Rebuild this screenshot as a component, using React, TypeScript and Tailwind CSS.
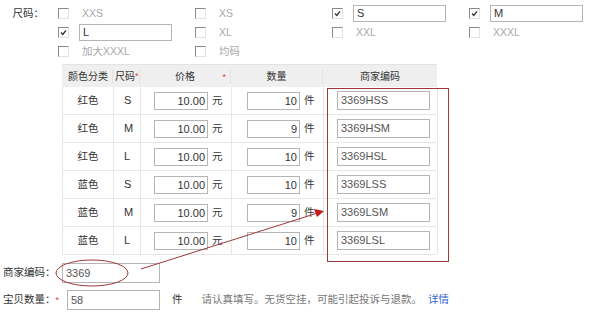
import React from 'react';

type Opt = { label: string; checked?: boolean };

const sizeRows: Opt[][] = [
  [{ label: 'XXS' }, { label: 'XS' }, { label: 'S', checked: true }, { label: 'M', checked: true }],
  [{ label: 'L', checked: true }, { label: 'XL' }, { label: 'XXL' }, { label: 'XXXL' }],
  [{ label: '加大XXXL' }, { label: '均码' }],
];

const skus = [
  { color: '红色', size: 'S', qty: '10', code: '3369HSS' },
  { color: '红色', size: 'M', qty: '9', code: '3369HSM' },
  { color: '红色', size: 'L', qty: '10', code: '3369HSL' },
  { color: '蓝色', size: 'S', qty: '10', code: '3369LSS' },
  { color: '蓝色', size: 'M', qty: '9', code: '3369LSM' },
  { color: '蓝色', size: 'L', qty: '10', code: '3369LSL' },
];

const Box: React.FC<{ checked?: boolean }> = ({ checked }) => (
  <span className="inline-flex h-[11px] w-[11px] shrink-0 items-center justify-center border border-t-[#8a8a8a] border-l-[#8a8a8a] border-r-[#e2e2e2] border-b-[#e2e2e2] bg-white">
    {checked && (
      <svg width="7" height="7" viewBox="0 0 7 7">
        <path d="M1 3.6 L2.8 5.4 L6 1.4" fill="none" stroke="#333" strokeWidth="1.4" />
      </svg>
    )}
  </span>
);

const Star = () => <span className="text-[9px] leading-none text-[#e0383e]">*</span>;

export default function App() {
  return (
    <div className="relative h-[315px] w-[600px] overflow-hidden bg-white font-['Liberation_Sans','Noto_Sans_CJK_SC',sans-serif] text-[10.5px] text-[#333]">
      {/* size options */}
      <div className="flex pt-[4px]">
        <div className="h-[19px] w-[62px] pr-[8px] text-right leading-[19px]">尺码：</div>
        <div className="flex flex-col">
          {sizeRows.map((row, i) => (
            <div key={i} className="flex h-[19px]">
              {row.map((o) => (
                <div key={o.label} className="flex w-[137px] items-center pl-[6px]">
                  <Box checked={o.checked} />
                  {o.checked ? (
                    <div className="ml-[10px] flex h-[17px] w-[93px] items-center border border-[#b5b5b5] pl-[3px] text-[11px] text-[#333]">
                      {o.label}
                    </div>
                  ) : (
                    <span className="ml-[13px] text-[#a8a8a8]">{o.label}</span>
                  )}
                </div>
              ))}
            </div>
          ))}
        </div>
      </div>

      {/* sku table */}
      <div className="ml-[62px] mt-[3px] w-[375px]">
        <div className="grid h-[23px] grid-cols-[50px_27px_91px_92px_115px] items-center whitespace-nowrap border-t border-[#e3e3e3] bg-[#efefef] text-[10px]">
          <div className="pl-[6px]">颜色分类</div>
          <div className="flex items-center border-l border-[#e3e3e3] pl-[2px]">
            尺码<Star />
          </div>
          <div className="grid grid-cols-[1fr_auto_1fr] items-center border-l border-[#e3e3e3]">
            <span />
            <span>价格</span>
            <span className="justify-self-end pr-[4px]">
              <Star />
            </span>
          </div>
          <div className="border-l border-[#e3e3e3] text-center">数量</div>
          <div className="border-l border-[#e3e3e3] text-center">商家编码</div>
        </div>
        {skus.map((s, i) => (
          <div
            key={i}
            className="grid h-[28px] grid-cols-[50px_27px_91px_92px_115px] border-b border-l border-[#e6e6e6]"
          >
            <div className="flex items-center justify-center">{s.color}</div>
            <div className="flex items-center border-l border-[#e6e6e6] pl-[10px] text-[11px]">{s.size}</div>
            <div className="flex items-center border-l border-[#e6e6e6] pl-[13px]">
              <div className="h-[18px] w-[54px] border border-[#b5b5b5] pr-[2px] text-right text-[11px] leading-[16px]">10.00</div>
              <span className="ml-[4px]">元</span>
            </div>
            <div className="flex items-center border-l border-[#e6e6e6] pl-[15px]">
              <div className="h-[18px] w-[53px] border border-[#b5b5b5] pr-[2px] text-right text-[11px] leading-[16px]">{s.qty}</div>
              <span className="ml-[4px]">件</span>
            </div>
            <div className="flex items-center border-l border-r border-[#e6e6e6] pl-[13px]">
              <div className="h-[19px] w-[93px] border border-[#b5b5b5] pl-[3px] text-[11px] leading-[17px] text-[#555]">{s.code}</div>
            </div>
          </div>
        ))}
      </div>

      {/* bottom fields */}
      <div className="mt-[8px] flex h-[20px] items-center">
        <div className="w-[62px] whitespace-nowrap pl-[3px]">商家编码：</div>
        <div className="h-[20px] w-[98px] border border-[#b5b5b5] pl-[3px] text-[11px] leading-[18px] text-[#555]">3369</div>
      </div>
      <div className="mt-[7px] flex h-[20px] items-center">
        <div className="flex w-[67px] items-center whitespace-nowrap pl-[3px]">
          宝贝数量：<Star />
        </div>
        <div className="h-[20px] w-[93px] border border-[#b5b5b5] pl-[3px] text-[11px] leading-[18px] text-[#555]">58</div>
        <span className="ml-[12px]">件</span>
        <span className="ml-[19px] text-[#777]">请认真填写。无货空挂，可能引起投诉与退款。</span>
        <span className="ml-[6px] text-[#3366cc]">详情</span>
      </div>

      {/* annotations */}
      <svg className="pointer-events-none absolute left-0 top-0" width="600" height="315">
        <rect x="327.5" y="88.5" width="121" height="173" fill="none" stroke="#9c3a3a" strokeWidth="1" />
        <ellipse cx="92" cy="273" rx="36" ry="13" fill="none" stroke="#9c3a3a" strokeWidth="1" />
        <line x1="141" y1="269" x2="316" y2="213.5" stroke="#9c3a3a" strokeWidth="1" />
        <path d="M324 211 L314 209 L317 217 Z" fill="#c41a1a" />
      </svg>
    </div>
  );
}
